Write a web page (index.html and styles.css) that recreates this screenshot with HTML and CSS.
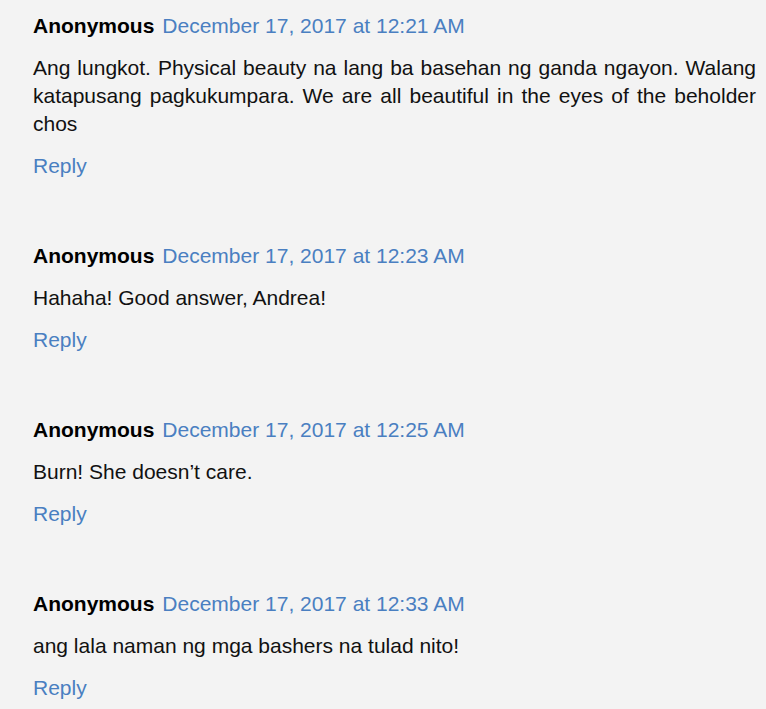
FILE: index.html
```html
<!DOCTYPE html>
<html lang="en">
<head>
    <meta charset="UTF-8">
    <meta name="viewport" content="width=device-width, initial-scale=1.0">
    <title>Comments</title>
    <link rel="stylesheet" href="styles.css">
</head>
<body>
    <div class="comments">
        <div class="comment">
            <div class="comment-header">
                <span class="user">Anonymous</span>
                <a class="datetime" href="#">December 17, 2017 at 12:21 AM</a>
            </div>
            <p class="comment-content">Ang lungkot. Physical beauty na lang ba basehan ng ganda ngayon. Walang katapusang pagkukumpara. We are all beautiful in the eyes of the beholder chos</p>
            <a class="reply" href="#">Reply</a>
        </div>
        <div class="comment">
            <div class="comment-header">
                <span class="user">Anonymous</span>
                <a class="datetime" href="#">December 17, 2017 at 12:23 AM</a>
            </div>
            <p class="comment-content">Hahaha! Good answer, Andrea!</p>
            <a class="reply" href="#">Reply</a>
        </div>
        <div class="comment">
            <div class="comment-header">
                <span class="user">Anonymous</span>
                <a class="datetime" href="#">December 17, 2017 at 12:25 AM</a>
            </div>
            <p class="comment-content">Burn! She doesn’t care.</p>
            <a class="reply" href="#">Reply</a>
        </div>
        <div class="comment">
            <div class="comment-header">
                <span class="user">Anonymous</span>
                <a class="datetime" href="#">December 17, 2017 at 12:33 AM</a>
            </div>
            <p class="comment-content">ang lala naman ng mga bashers na tulad nito!</p>
            <a class="reply" href="#">Reply</a>
        </div>
    </div>
</body>
</html>
```

FILE: styles.css
```css
body {
    margin: 0;
    font-family: Arial, "Liberation Sans", sans-serif;
    font-size: 21px;
    line-height: 28px;
    background-color: #f3f3f3;
    color: #111;
}
.comments {
    padding: 12px 10px 0 33px;
}
.comment {
    margin-bottom: 62px;
}
.comment-header {
    display: flex;
    gap: 8px;
}
.user {
    font-weight: bold;
    color: #000;
}
.datetime {
    color: #4a7fc1;
    text-decoration: none;
}
.comment-content {
    margin: 14px 0;
    text-align: justify;
}
.reply {
    display: block;
    color: #4a7fc1;
    text-decoration: none;
}
```
